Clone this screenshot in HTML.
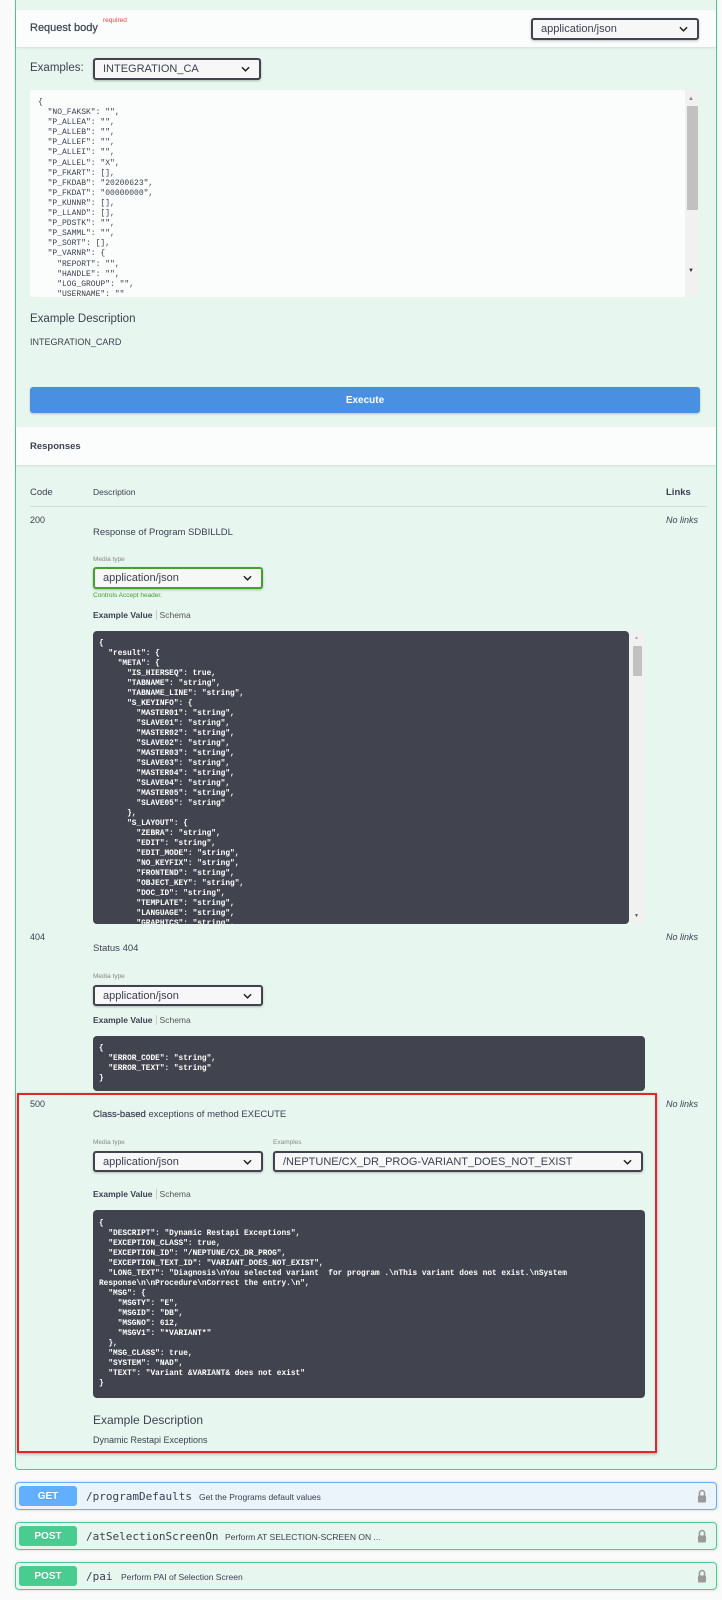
<!DOCTYPE html>
<html><head><meta charset="utf-8"><style>
*{margin:0;padding:0;box-sizing:border-box}
body{width:722px;height:1600px;background:#fafafa;font-family:"Liberation Sans",sans-serif;color:#3b4151;position:relative;overflow:hidden}
.a{position:absolute}
.t{position:absolute;white-space:nowrap;line-height:1}
.sel{position:absolute;background:#f7f7f7;border:2px solid #41444e;border-radius:3px;box-shadow:0 1px 2px rgba(0,0,0,.25);font-size:11px;color:#3b4151;padding-left:8px;display:flex;align-items:center}
.sel svg{position:absolute;right:9px;top:50%;margin-top:-3px}
pre{font-family:"Liberation Mono",monospace;white-space:pre;position:absolute}
.code{background:#41444e;border-radius:4px;color:#fff;font-weight:bold;font-size:7.8px;line-height:10px;padding:8px 0 0 6px;overflow:hidden}
.small{font-size:6.5px;color:#888}
.ev{font-size:8.5px}
.bar{position:absolute;left:15px;width:702px;height:28px;border:1px solid;border-radius:4px;box-shadow:0 0 3px rgba(0,0,0,.15)}
.badge{position:absolute;left:3px;top:3px;width:58px;height:20px;border-radius:3px;color:#fff;font-weight:bold;font-size:10px;display:flex;align-items:center;justify-content:center;text-shadow:0 1px 0 rgba(0,0,0,.1)}
.path{position:absolute;left:70px;top:7px;font-family:"DejaVu Sans Mono",monospace;font-size:11px;color:#3b4151;white-space:nowrap}
.desc{position:absolute;top:9px;font-size:8.5px;color:#3b4151;white-space:nowrap}
.lock{position:absolute;right:9px;top:6px}
</style></head><body>
<svg width="0" height="0" style="position:absolute"><defs><symbol id="chev" viewBox="0 0 10 6"><path d="M1 1l4 4 4-4" fill="none" stroke="#222" stroke-width="1.6"/></symbol><symbol id="lk" viewBox="0 0 10 14"><path d="M2.5 7V4a2.5 2.5 0 0 1 5 0v3" fill="none" stroke="#999" stroke-width="1.5"/><rect x="1" y="6.5" width="8" height="7" rx="1" fill="#999"/></symbol></defs></svg>

<div class="a" style="left:15px;top:-5px;width:702px;height:1475px;background:#e8f6f0;border:1px solid #49cc90;border-radius:4px"></div>
<div class="a" style="left:16px;top:10px;width:700px;height:37px;background:#fbfcfc;box-shadow:0 1px 2px rgba(0,0,0,.1)"></div>
<div class="t" style="left:30px;top:23px;font-size:11px;color:#3b4151;-webkit-text-stroke:.2px #3b4151">Request body</div>
<div class="t" style="left:103px;top:18px;font-size:6.5px;color:#f93e3e">required</div>
<div class="sel" style="left:531px;top:18px;width:168px;height:22px">application/json<svg width="9" height="6"><use href="#chev"/></svg></div>

<div class="t" style="left:30px;top:63px;font-size:11.5px">Examples:</div>
<div class="sel" style="left:93px;top:58px;width:168px;height:22px">INTEGRATION_CA<svg width="9" height="6"><use href="#chev"/></svg></div>

<div class="a" style="left:30px;top:90px;width:670px;height:207px;background:#fbfcfc;border-radius:3px;overflow:hidden">
<pre style="left:8px;top:8px;font-size:8px;line-height:10.1px;color:#3b4151">{
  "NO_FAKSK": "",
  "P_ALLEA": "",
  "P_ALLEB": "",
  "P_ALLEF": "",
  "P_ALLEI": "",
  "P_ALLEL": "X",
  "P_FKART": [],
  "P_FKDAB": "20200623",
  "P_FKDAT": "00000000",
  "P_KUNNR": [],
  "P_LLAND": [],
  "P_PDSTK": "",
  "P_SAMML": "",
  "P_SORT": [],
  "P_VARNR": {
    "REPORT": "",
    "HANDLE": "",
    "LOG_GROUP": "",
    "USERNAME": ""</pre>
<div class="a" style="left:655px;top:0;width:15px;height:207px;background:#f1f1f1"></div>
<div class="a" style="left:657px;top:16px;width:11px;height:104px;background:#c1c1c1"></div>
<div class="t" style="left:658px;top:6px;font-size:6px;color:#888">▲</div>
<div class="t" style="left:658px;top:178px;font-size:6px;color:#333">▼</div>
</div>

<div class="t" style="left:30px;top:314px;font-size:11.5px;color:#3b4151">Example Description</div>
<div class="t" style="left:30px;top:338px;font-size:9px;color:#3b4151">INTEGRATION_CARD</div>

<div class="a" style="left:30px;top:387px;width:670px;height:26px;background:#4990e2;border-radius:3px;box-shadow:0 1px 2px rgba(0,0,0,.2);color:#fff;font-weight:bold;font-size:10px;display:flex;align-items:center;justify-content:center">Execute</div>

<div class="a" style="left:16px;top:427px;width:700px;height:38px;background:#fbfcfc;box-shadow:0 1px 2px rgba(0,0,0,.1)"></div>
<div class="t" style="left:30px;top:442px;font-size:9.5px;font-weight:bold">Responses</div>

<div class="t" style="left:30px;top:488px;font-size:9.5px">Code</div>
<div class="t" style="left:93px;top:488px;font-size:8.5px">Description</div>
<div class="t" style="left:666px;top:488px;font-size:9.5px;font-weight:bold">Links</div>
<div class="a" style="left:30px;top:506px;width:677px;height:1px;background:#cddcd5"></div>

<div class="t" style="left:30px;top:516px;font-size:9px">200</div>
<div class="t" style="left:666px;top:516px;font-size:9px;font-style:italic;color:#3b4151">No links</div>
<div class="t" style="left:93px;top:528px;font-size:9.5px">Response of Program SDBILLDL</div>
<div class="t small" style="left:93px;top:557px">Media type</div>
<div class="sel" style="left:93px;top:567px;width:170px;height:22px;border-color:#41a32a">application/json<svg width="9" height="6"><use href="#chev"/></svg></div>
<div class="t" style="left:93px;top:593px;font-size:6.5px;color:#3f9f2c">Controls Accept header.</div>
<div class="t ev" style="left:93px;top:611px"><b>Example Value</b><span style="border-left:1px solid #ccc;margin-left:3px;padding-left:3px;color:#555">Schema</span></div>
<pre class="code" style="left:93px;top:631px;width:536px;height:293px">{
  "result": {
    "META": {
      "IS_HIERSEQ": true,
      "TABNAME": "string",
      "TABNAME_LINE": "string",
      "S_KEYINFO": {
        "MASTER01": "string",
        "SLAVE01": "string",
        "MASTER02": "string",
        "SLAVE02": "string",
        "MASTER03": "string",
        "SLAVE03": "string",
        "MASTER04": "string",
        "SLAVE04": "string",
        "MASTER05": "string",
        "SLAVE05": "string"
      },
      "S_LAYOUT": {
        "ZEBRA": "string",
        "EDIT": "string",
        "EDIT_MODE": "string",
        "NO_KEYFIX": "string",
        "FRONTEND": "string",
        "OBJECT_KEY": "string",
        "DOC_ID": "string",
        "TEMPLATE": "string",
        "LANGUAGE": "string",
        "GRAPHICS": "string",</pre>
<div class="a" style="left:631px;top:631px;width:13px;height:293px;background:#f1f1f1"></div>
<div class="a" style="left:633px;top:646px;width:9px;height:30px;background:#c1c1c1"></div>
<div class="t" style="left:634px;top:636px;font-size:5px;color:#aaa">▲</div>
<div class="t" style="left:634px;top:914px;font-size:5px;color:#555">▼</div>

<div class="t" style="left:30px;top:933px;font-size:9px">404</div>
<div class="t" style="left:666px;top:933px;font-size:9px;font-style:italic">No links</div>
<div class="t" style="left:93px;top:944px;font-size:9.5px">Status 404</div>
<div class="t small" style="left:93px;top:974px">Media type</div>
<div class="sel" style="left:93px;top:985px;width:170px;height:21px">application/json<svg width="9" height="6"><use href="#chev"/></svg></div>
<div class="t ev" style="left:93px;top:1016px"><b>Example Value</b><span style="border-left:1px solid #ccc;margin-left:3px;padding-left:3px;color:#555">Schema</span></div>
<pre class="code" style="left:93px;top:1036px;width:552px;height:55px">{
  "ERROR_CODE": "string",
  "ERROR_TEXT": "string"
}</pre>

<div class="a" style="left:17px;top:1093px;width:640px;height:360px;border:2px solid #e8232a;box-shadow:0 1px 3px rgba(0,0,0,.3)"></div>
<div class="t" style="left:30px;top:1100px;font-size:9px">500</div>
<div class="t" style="left:666px;top:1100px;font-size:9px;font-style:italic">No links</div>
<div class="t" style="left:93px;top:1110px;font-size:9.5px"><span style="-webkit-text-stroke:.2px #3b4151">Class-based</span> exceptions of method EXECUTE</div>
<div class="t small" style="left:93px;top:1140px">Media type</div>
<div class="t small" style="left:273px;top:1140px">Examples</div>
<div class="sel" style="left:93px;top:1151px;width:170px;height:21px">application/json<svg width="9" height="6"><use href="#chev"/></svg></div>
<div class="sel" style="left:273px;top:1151px;width:370px;height:21px">/NEPTUNE/CX_DR_PROG-VARIANT_DOES_NOT_EXIST<svg width="9" height="6"><use href="#chev"/></svg></div>
<div class="t ev" style="left:93px;top:1190px"><b>Example Value</b><span style="border-left:1px solid #ccc;margin-left:3px;padding-left:3px;color:#555">Schema</span></div>
<pre class="code" style="left:93px;top:1210px;width:552px;height:188px;padding-top:9px">{
  "DESCRIPT": "Dynamic Restapi Exceptions",
  "EXCEPTION_CLASS": true,
  "EXCEPTION_ID": "/NEPTUNE/CX_DR_PROG",
  "EXCEPTION_TEXT_ID": "VARIANT_DOES_NOT_EXIST",
  "LONG_TEXT": "Diagnosis\nYou selected variant  for program .\nThis variant does not exist.\nSystem
Response\n\nProcedure\nCorrect the entry.\n",
  "MSG": {
    "MSGTY": "E",
    "MSGID": "DB",
    "MSGNO": 612,
    "MSGV1": "*VARIANT*"
  },
  "MSG_CLASS": true,
  "SYSTEM": "NAD",
  "TEXT": "Variant &amp;VARIANT&amp; does not exist"
}</pre>
<div class="t" style="left:93px;top:1414px;font-size:12px">Example Description</div>
<div class="t" style="left:93px;top:1436px;font-size:9px">Dynamic Restapi Exceptions</div>

<div class="bar" style="top:1482px;background:#ebf3fb;border-color:#61affe">
<div class="badge" style="background:#61affe">GET</div>
<div class="path">/programDefaults</div>
<div class="desc" style="left:183px">Get the Programs default values</div>
<svg class="lock" width="10" height="14"><use href="#lk"/></svg></div>
<div class="bar" style="top:1522px;background:#e8f6f0;border-color:#49cc90">
<div class="badge" style="background:#49cc90">POST</div>
<div class="path">/atSelectionScreenOn</div>
<div class="desc" style="left:209px">Perform AT SELECTION-SCREEN ON ...</div>
<svg class="lock" width="10" height="14"><use href="#lk"/></svg></div>
<div class="bar" style="top:1562px;background:#e8f6f0;border-color:#49cc90">
<div class="badge" style="background:#49cc90">POST</div>
<div class="path">/pai</div>
<div class="desc" style="left:105px">Perform PAI of Selection Screen</div>
<svg class="lock" width="10" height="14"><use href="#lk"/></svg></div>
</body></html>
